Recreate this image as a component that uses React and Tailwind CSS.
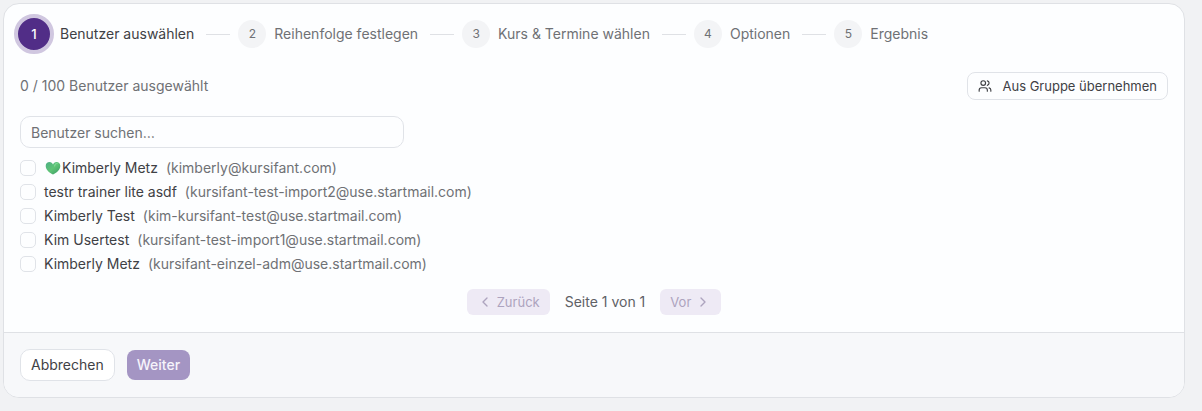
import React, { useState } from "react";
import { ChevronLeft, ChevronRight, Users } from "lucide-react";
import clsx from "clsx";

const steps = [
  "Benutzer auswählen",
  "Reihenfolge festlegen",
  "Kurs & Termine wählen",
  "Optionen",
  "Ergebnis",
];

const users = [
  { id: 1, name: "Kimberly Metz", email: "kimberly@kursifant.com", heart: true },
  { id: 2, name: "testr trainer lite asdf", email: "kursifant-test-import2@use.startmail.com" },
  { id: 3, name: "Kimberly Test", email: "kim-kursifant-test@use.startmail.com" },
  { id: 4, name: "Kim Usertest", email: "kursifant-test-import1@use.startmail.com" },
  { id: 5, name: "Kimberly Metz", email: "kursifant-einzel-adm@use.startmail.com" },
];

function Heart() {
  return (
    <svg viewBox="0 0 16 14" className="mx-px h-3.5 w-4 shrink-0" aria-hidden="true">
      <defs>
        <linearGradient id="heart" x1="0" y1="0" x2="1" y2="1">
          <stop offset="0" stopColor="#4cae85" />
          <stop offset="0.5" stopColor="#5fc476" />
          <stop offset="1" stopColor="#379765" />
        </linearGradient>
      </defs>
      <path
        d="M8 13.6C5.500 12.300 0.700 9 0.700 4.900 0.700 2.500 2.400 1 4.500 1 6.200 1 7.400 2 8 3.400 8.600 2 9.800 1 11.500 1 13.600 1 15.300 2.500 15.300 4.900 15.300 9 10.500 12.300 8 13.600Z"
        fill="url(#heart)"
      />
      <path d="M9.500 5C10 3.300 11 2.300 12.300 2.500" stroke="#7dd893" strokeWidth="1.200" strokeLinecap="round" fill="none" />
    </svg>
  );
}

function Stepper({ current }) {
  return (
    <ol className="flex h-10 items-center px-2.5 text-sm text-[#6f7175]">
      {steps.map((label, i) => (
        <li key={label} className="flex items-center" aria-current={i === current ? "step" : undefined}>
          {i > 0 && <span className="ml-3 mr-2 h-px w-6 bg-[#dfe1e5]" />}
          <span
            className={clsx(
              "flex shrink-0 items-center justify-center rounded-full",
              i === current
                ? "mr-1.5 size-10 border-4 border-[#d0c7e0] bg-[#512d87] text-[13px] font-medium text-white"
                : "mr-2 size-7 bg-[#f3f4f6] text-xs"
            )}
          >
            {i + 1}
          </span>
          <span className={clsx("whitespace-nowrap", i === current && "text-[#3f4145]")}>{label}</span>
        </li>
      ))}
    </ol>
  );
}

export default function App() {
  const [search, setSearch] = useState("");
  const [selected, setSelected] = useState([]);

  const toggle = (id) =>
    setSelected((prev) => (prev.includes(id) ? prev.filter((x) => x !== id) : [...prev, id]));

  const visible = users.filter((u) =>
    `${u.name} ${u.email}`.toLowerCase().includes(search.toLowerCase())
  );

  return (
    <div className="min-h-screen bg-[#f1f2f4] py-[3px] pl-[3px] pr-[17px] font-['Inter',sans-serif] text-sm text-[#3f4145]">
      <main className="overflow-hidden rounded-2xl border border-[#dfe1e5] bg-[#fdfeff]">
        <div className="pt-2.5">
          <Stepper current={0} />
        </div>

        <div className="px-4 pb-[17px] pt-[18px]">
          <div className="flex items-center justify-between">
            <p className="text-[#6f7175]">{selected.length} / 100 Benutzer ausgewählt</p>
            <button
              type="button"
              className="flex h-7 items-center gap-2.5 rounded-lg border border-[#e0e3e8] px-2.5 text-[13px]"
            >
              <Users size={14} />
              Aus Gruppe übernehmen
            </button>
          </div>

          <input
            type="text"
            aria-label="Benutzer suchen"
            placeholder="Benutzer suchen…"
            value={search}
            onChange={(e) => setSearch(e.target.value)}
            className="mt-4 block h-8 w-96 max-w-full rounded-[10px] border border-[#e0e3e8] px-2.5 outline-none placeholder:text-[#6f7175]"
          />

          <ul className="mt-2">
            {visible.map((u) => (
              <li key={u.id}>
                <label className="flex h-6 items-center">
                  <input
                    type="checkbox"
                    checked={selected.includes(u.id)}
                    onChange={() => toggle(u.id)}
                    className="mr-2 size-4 shrink-0 appearance-none rounded-[5px] border border-[#e0e3e8] checked:border-[#512d87] checked:bg-[#512d87]"
                  />
                  {u.heart && <Heart />}
                  <span>{u.name}</span>
                  <span className="ml-2 text-[#6f7175]">({u.email})</span>
                </label>
              </li>
            ))}
          </ul>

          <div className="mt-[13px] flex items-center justify-center gap-[15px]">
            <button
              type="button"
              disabled
              className="flex h-[26px] items-center gap-1 rounded-md bg-[#eeeaf5] px-2.5 text-[13px] text-[#ada3be]"
            >
              <ChevronLeft size={16} />
              Zurück
            </button>
            <span className="text-[#5f6166]">Seite 1 von 1</span>
            <button
              type="button"
              disabled
              className="flex h-[26px] items-center gap-1 rounded-md bg-[#eeeaf5] px-2.5 text-[13px] text-[#ada3be]"
            >
              Vor
              <ChevronRight size={16} />
            </button>
          </div>
        </div>

        <footer className="flex items-center gap-3 border-t border-[#dfe1e5] bg-[#f7f8fa] p-4">
          <button type="button" className="h-8 rounded-[10px] border border-[#e0e3e8] bg-white px-2.5">
            Abbrechen
          </button>
          <button type="button" disabled className="h-[30px] rounded-lg bg-[#a495c3] px-2.5 font-medium text-[#f6f3fb]">
            Weiter
          </button>
        </footer>
      </main>
    </div>
  );
}
